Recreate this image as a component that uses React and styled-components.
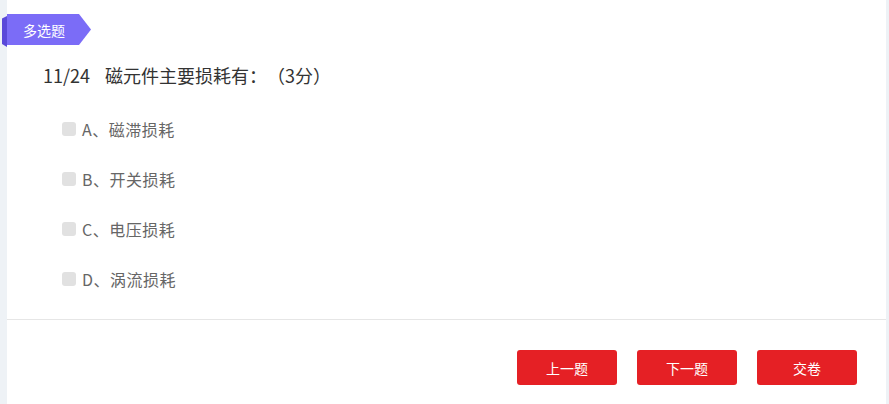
import styled, { createGlobalStyle } from 'styled-components';

const GlobalStyle = createGlobalStyle`
  html, body {
    margin: 0;
    padding: 0;
    background: #eef2f6;
    font-family: "Noto Sans CJK SC", "Noto Sans", sans-serif;
    text-spacing-trim: space-all;
  }
`;

const options = ['A、磁滞损耗', 'B、开关损耗', 'C、电压损耗', 'D、涡流损耗'];
const actions = ['上一题', '下一题', '交卷'];

const App = () => {
  return (
    <Page>
      <GlobalStyle />
      <Card>
        <BadgeWrap>
          <Fold />
          <Badge>多选题</Badge>
        </BadgeWrap>
        <Question>
          <Index>11/24</Index>
          磁元件主要损耗有：（3分）
        </Question>
        <OptionList>
          {options.map((o) => (
            <Option key={o}>
              <Check />
              <span>{o}</span>
            </Option>
          ))}
        </OptionList>
        <Footer>
          {actions.map((a) => (
            <Button key={a}>{a}</Button>
          ))}
        </Footer>
      </Card>
    </Page>
  );
};

export default App;

const purple = '#7b6cf7';
const red = '#e52025';

const Page = styled.div`
  padding: 0 3px 0 7px;
  min-height: 404px;
  box-sizing: border-box;
`;

const Card = styled.div`
  background: #fff;
  min-height: 404px;
  padding-top: 14px;
  box-sizing: border-box;
`;

const BadgeWrap = styled.div`
  position: relative;
  margin-left: -5px;
  width: 89px;
  height: 31px;
`;

const Fold = styled.div`
  position: absolute;
  left: 0;
  top: 2px;
  width: 5px;
  height: 31px;
  background: #5a49d9;
  clip-path: polygon(100% 0, 100% 100%, 0 90%, 0 8%);
`;

const Badge = styled.div`
  position: relative;
  margin-left: 5px;
  width: 84px;
  height: 31px;
  padding-right: 10px;
  box-sizing: border-box;
  background: ${purple};
  color: #fff;
  font-size: 14px;
  display: flex;
  align-items: center;
  justify-content: center;
  clip-path: polygon(0 0, 72px 0, 100% 50%, 72px 100%, 0 100%);
`;

const Question = styled.div`
  margin: 17px 0 0 36px;
  font-size: 18px;
  line-height: 26px;
  color: #333;
  text-spacing-trim: space-all;
`;

const Index = styled.span`
  margin-right: 15px;
`;

const OptionList = styled.div`
  display: flex;
  flex-direction: column;
  gap: 30px;
  margin: 31px 0 0 55px;
`;

const Option = styled.label`
  display: flex;
  align-items: center;
  gap: 6px;
  font-size: 16px;
  letter-spacing: 0.5px;
  line-height: 20px;
  color: #666;
`;

const Check = styled.span`
  width: 14px;
  height: 14px;
  border-radius: 3px;
  background: #e1e1e1;
`;

const Footer = styled.div`
  margin-top: 30px;
  border-top: 1px solid #e6e6e6;
  padding: 30px 29px 19px 0;
  display: flex;
  justify-content: flex-end;
  gap: 20px;
`;

const Button = styled.button`
  width: 100px;
  height: 35px;
  border: none;
  border-radius: 3px;
  background: ${red};
  color: #fff;
  font-family: inherit;
  font-size: 14px;
  cursor: pointer;
`;
